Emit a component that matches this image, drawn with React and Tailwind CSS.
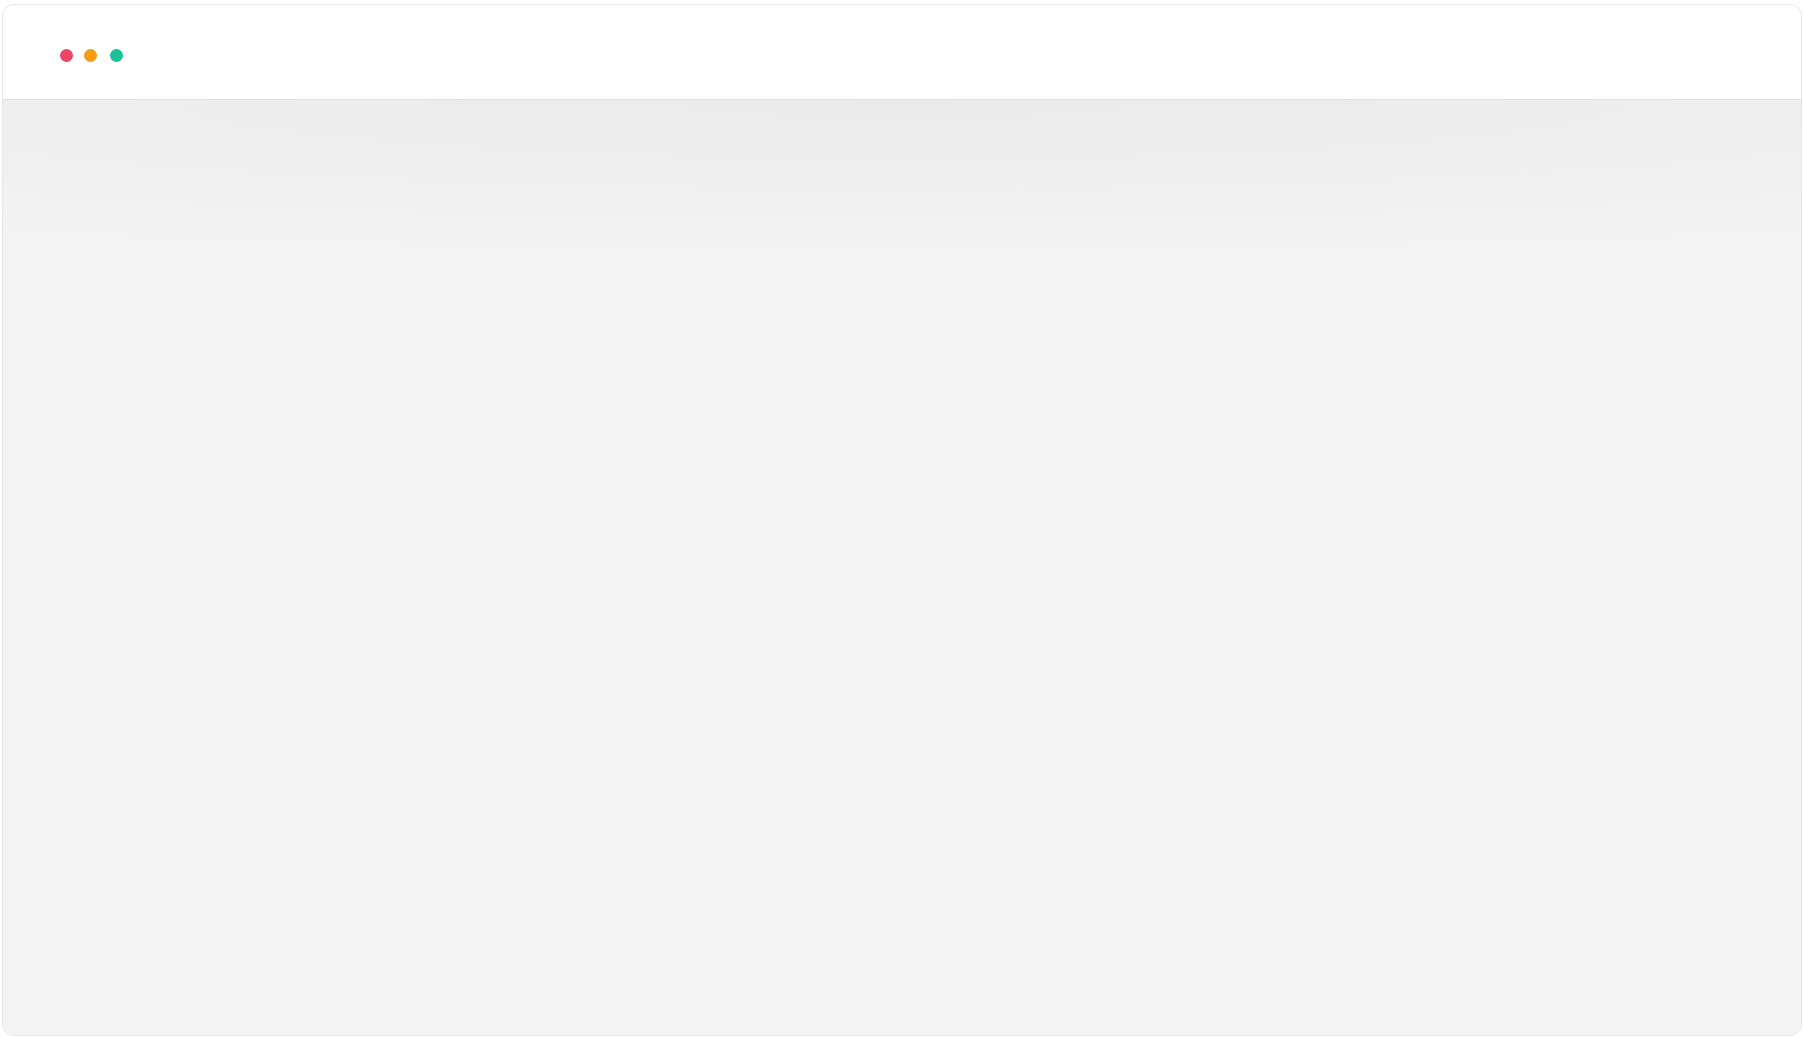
export default function App() {
  return (
    <div className="h-screen w-full bg-white pt-[4px] pb-[1px] pl-[2px] pr-[1px]">
      <div className="h-full flex flex-col rounded-[12px] border border-[#e6e6ec] overflow-hidden bg-[#f4f4f4]">
        {/* title bar */}
        <div className="h-[95px] shrink-0 bg-white border-b border-[#dcdce2] flex items-start pl-[57px] pt-[44px]">
          <span className="w-[13px] h-[13px] rounded-full bg-[#ee4565]" />
          <span className="w-[13px] h-[13px] rounded-full bg-[#f59c12] ml-[11px]" />
          <span className="w-[13px] h-[13px] rounded-full bg-[#1abf9b] ml-[13px]" />
        </div>
        {/* page body */}
        <div className="flex-1 bg-[radial-gradient(ellipse_110%_160px_at_50%_0%,#eaeaea,#f4f4f4)]" />
      </div>
    </div>
  );
}
